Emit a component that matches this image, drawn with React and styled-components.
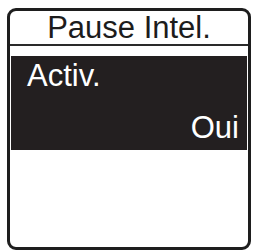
import React from 'react'
import styled, {createGlobalStyle} from 'styled-components'

const GlobalStyle = createGlobalStyle`
    html, body {
        margin: 0;
        padding: 0;
        background: #ffffff;
    }
    body {
        font-family: "Liberation Sans", Arial, sans-serif;
    }
`

const App = () => {
    return (
        <>
            <GlobalStyle />
            <Screen>
                <Title>Pause Intel.</Title>
                <Divider />
                <Selected>
                    <Label>Activ.</Label>
                    <Value>Oui</Value>
                </Selected>
            </Screen>
        </>
    )
}

export default App

const Screen = styled.div`
    box-sizing: border-box;
    width: 244px;
    height: 242px;
    margin: 8px 3px 1px 7px;
    border: 3px solid #1e1e1e;
    border-radius: 9px;
    display: flex;
    flex-direction: column;
    overflow: hidden;
`
const Title = styled.div`
    font-size: 31px;
    line-height: 31px;
    text-align: center;
    color: #1c1c1c;
    padding-top: 1px;
    padding-bottom: 1px;
`
const Divider = styled.div`
    height: 2px;
    background: #2a2a2a;
    margin-bottom: 10px;
`
const Selected = styled.div`
    background: #231f20;
    margin: 0 1px;
    padding: 4px 8px 7px 16px;
    display: flex;
    flex-direction: column;
    gap: 21px;
`
const Label = styled.div`
    color: #ffffff;
    font-size: 31px;
    line-height: 31px;
`
const Value = styled.div`
    color: #ffffff;
    font-size: 31px;
    line-height: 31px;
    text-align: right;
`
